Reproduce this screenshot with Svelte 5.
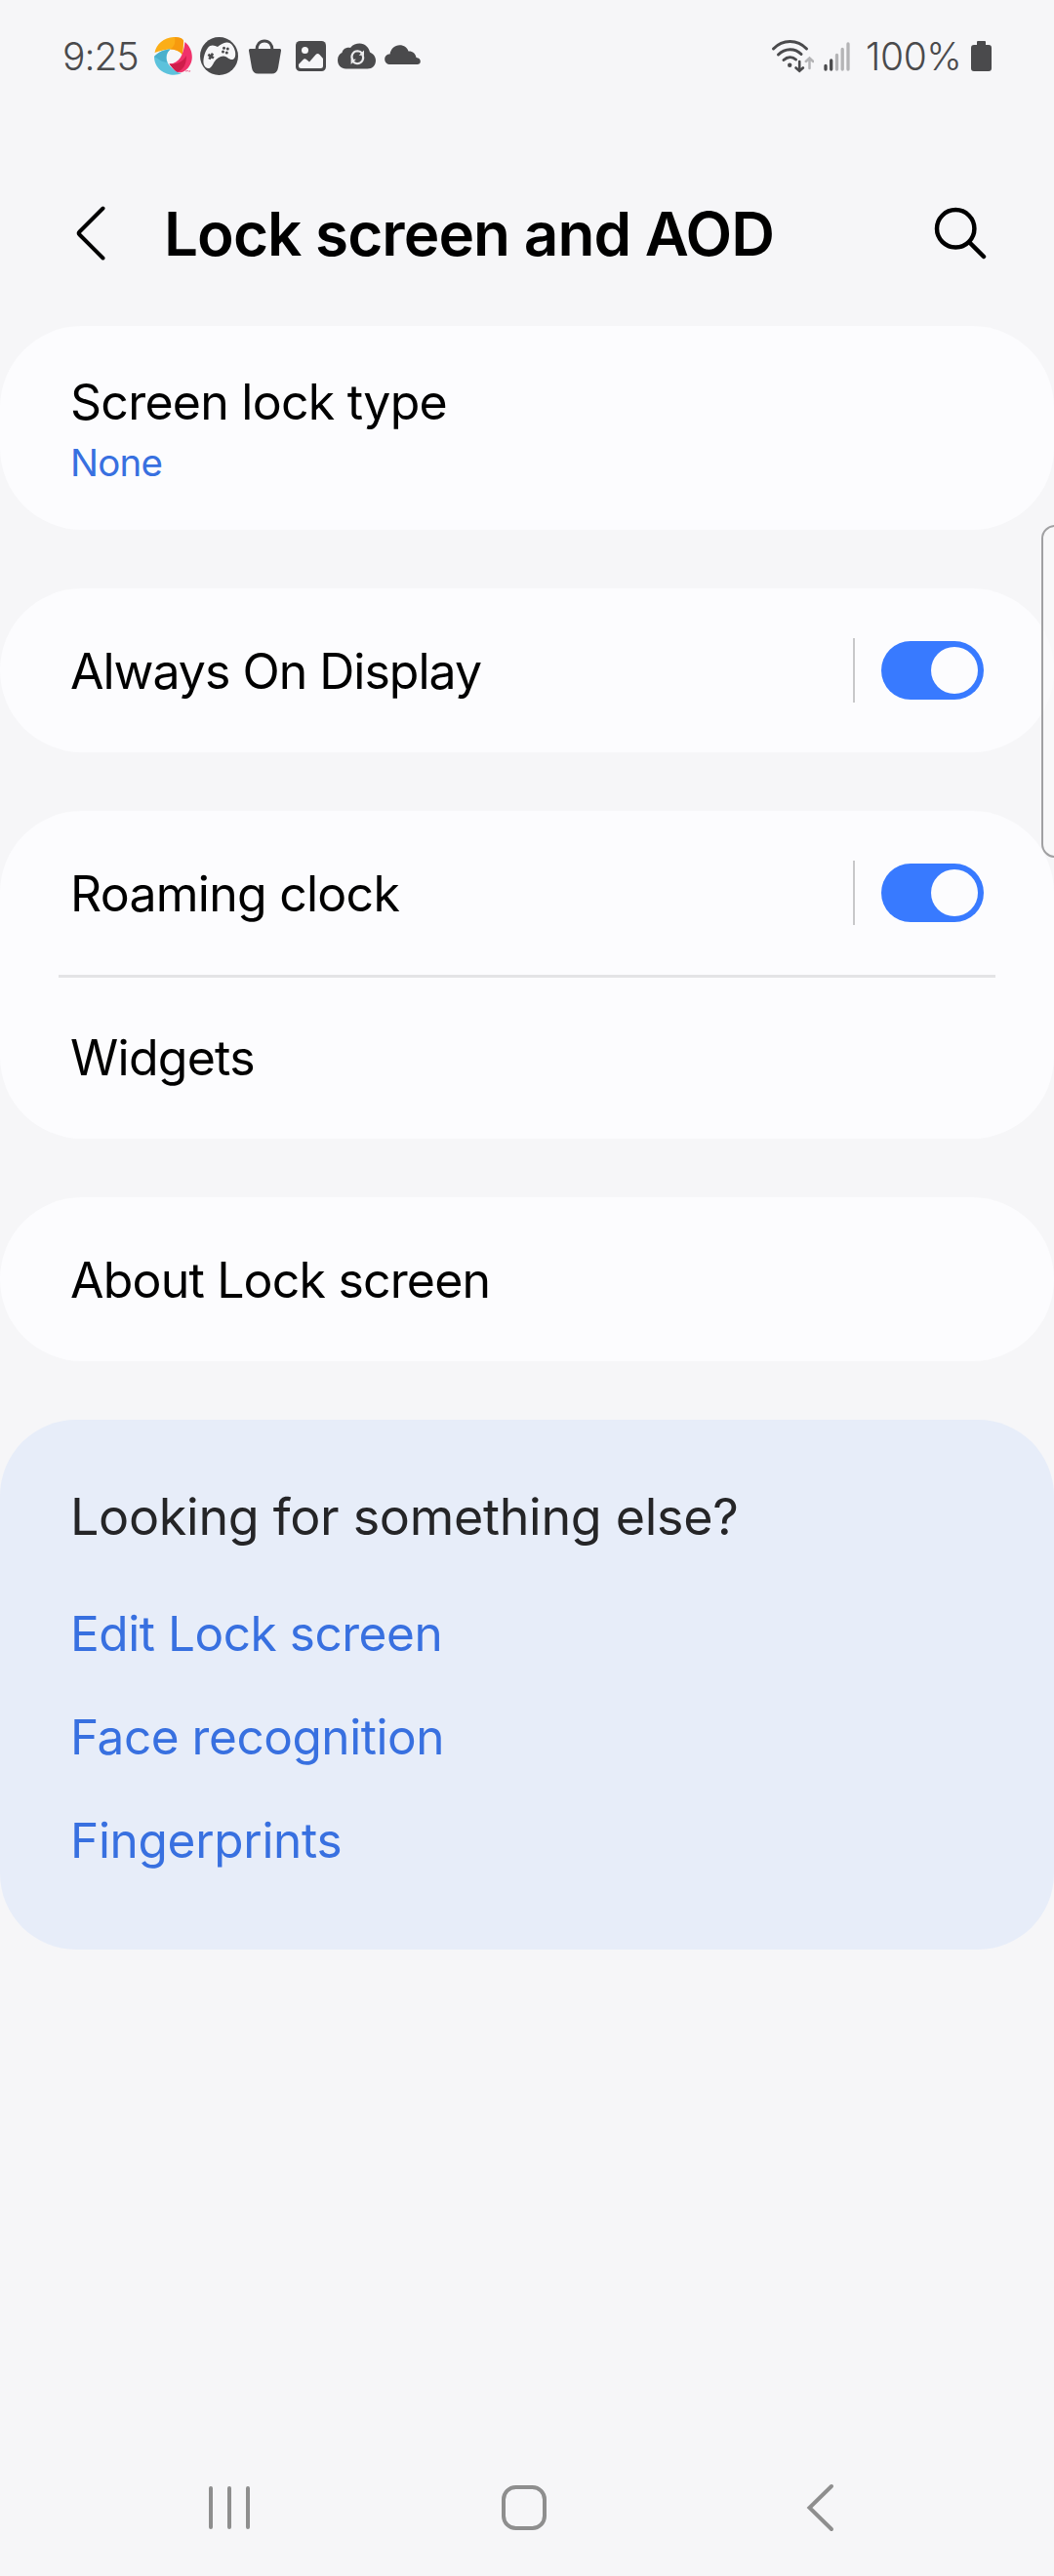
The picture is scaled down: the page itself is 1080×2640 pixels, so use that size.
<script>
  const links = [
    { label: 'Edit Lock screen', cls: 'edit' },
    { label: 'Face recognition', cls: 'face' },
    { label: 'Fingerprints', cls: 'finger' }
  ];
  let aod = $state(true);
  let roaming = $state(true);
</script>

{#snippet toggle(on, flip, label)}
  <span class="sep"></span>
  <button class="switch" class:on role="switch" aria-checked={on} aria-label={label} onclick={flip}>
    <span class="knob"></span>
  </button>
{/snippet}

<div class="screen">
  <header class="status">
    <span class="clock">9:25</span>
    <div class="notif">
      <svg width="40" height="40" viewBox="158 38 40 40">
        <path d="M158.500 54C160 45 169 37.500 180 38C185 38.200 188.500 40 188 43L187 56C181 49 172 49 158.500 54Z" fill="#fbae17" />
        <path d="M179 38C185 38.200 188.500 40 188 43L187 56C184 52 179 50.500 174 50.500C179 48 180 43 179 38Z" fill="#f79a0e" />
        <path d="M189.500 43C196 48 199 58 195 66C192 72 187 75.500 181 74C178 71 175 67.500 173.500 65.500C184 65 188 56 189.500 43Z" fill="#f0326b" />
        <path d="M173.500 65.500C183 66.500 188 62 191 57C191 66 188 72 181 74C178 71 175 67.500 173.500 65.500Z" fill="#cf1d4b" />
        <path d="M158 58C163 53 168 51 174.500 50.500C170 54 169 62 174 67.500C178 72 182 75 186 75C176 80 158 74 158 58Z" fill="#5cc2dc" />
        <path d="M158 58C163 53 168 51 174.500 50.500C170 54 169 60 171.500 64C166 64 162 60 158 58Z" fill="#4ab0cc" />
        <path d="M190 73l3-.5M193.500 73.500l1.500-1" stroke="#f06a94" stroke-width="1.200" />
      </svg>
      <svg width="39" height="39" viewBox="205 38 39 39">
        <circle cx="224.500" cy="57.500" r="19.500" fill="#4a4a4c" />
        <path d="M213 49C216 45 220 46.500 223 48C226 45.500 229 44 232 43.500C237 43 240 48 241 53C241.600 57 241 60 238.500 61C235 61.500 232 57.500 229 57.500C225 57.500 222 60 219.500 63.500C217.500 67 216 70.500 213 70C209 69 207.500 65 209 58C210 54 211 51.500 213 49Z" fill="#f6f6f8" />
        <path d="M213.300 55.800l5.600 3.700M218 54.700l-3.600 5.900" stroke="#4a4a4c" stroke-width="2.600" />
        <g fill="#4a4a4c"><circle cx="229.500" cy="49.200" r="1.500" /><circle cx="233.300" cy="50" r="1.500" /><circle cx="228.500" cy="53" r="1.500" /><circle cx="232.300" cy="54" r="1.500" /></g>
      </svg>
      <svg class="bag" width="33" height="36" viewBox="255 39.500 33 36">
        <path d="M263 51C263 45 266.500 41.500 271 41.500S279 45 279 51" fill="none" stroke="#4a4a4c" stroke-width="3.200" />
        <path d="M256.500 49.500H286.500Q288.200 49.500 288 51.500L285 69Q284 75 278.500 75H264.500Q259 75 258 69L255 51.500Q254.800 49.500 256.500 49.500Z" fill="#4a4a4c" />
      </svg>
      <svg class="photo" width="31" height="31" viewBox="303 42 31 31">
        <rect x="303" y="42" width="31" height="31" rx="4.500" fill="#4a4a4c" />
        <circle cx="312.500" cy="51.600" r="3.500" fill="#f6f6f8" />
        <path d="M306 66L310.500 61.200Q312.200 59.500 314 61L317 63.500L323.500 56Q325.500 54 327.500 56L331 60V67.500Q331 70 328.500 70H308.500Q306 70 306 67.500Z" fill="#f6f6f8" />
      </svg>
      <svg class="sync" width="39" height="27" viewBox="346 43.500 39 27">
        <path d="M354.500 70C349.500 70 346 66.500 346 61C346 57 348 54.500 350.500 53.500C351 50 355 47.500 359 48.500C361.500 45 365 44 368.500 44C374 44 378 48 379 53C382.500 54.500 385 57.500 385 61.500C385 66.500 381.500 70 376.500 70Z" fill="#4a4a4c" />
        <g fill="none" stroke="#ececee" stroke-width="2.100">
          <path d="M361.300 61C358.800 56.500 362 51.700 366.500 51.700Q369.300 51.900 371 54" />
          <path d="M371.300 55.500C373.800 60 370.600 64.700 366 64.700Q363.300 64.500 361.500 62.500" />
        </g>
        <path d="M373 51v5.300h-5.300ZM359.600 65.500v-5.300h5.300Z" fill="#ececee" />
      </svg>
      <svg class="cloud" width="37" height="21" viewBox="394 46 37 21">
        <path d="M400 66C396.500 66 394.200 64 394.200 60.500C394.200 57.500 396.500 55.500 399.500 55.500C400.500 50 404.500 46.300 409.500 46.300C414 46.300 417.500 49 418.500 52.500C422.500 52.200 426 55 426.500 59C429.500 59.300 430.800 61 430.800 63C430.800 65 429.500 66 427.500 66Z" fill="#4a4a4c" />
      </svg>
    </div>
    <div class="system">
      <svg width="44" height="36" viewBox="790 39 44 36">
        <g fill="none" stroke="#4a4a4c" stroke-width="3" stroke-linecap="round">
          <path d="M792.500 49C802 39 817 39 826.500 49" />
          <path d="M797.500 55C804.500 48 814.500 48 821 54.500" />
          <path d="M803 60.500C807 56.800 812 56.800 815.500 60" />
          <path d="M819.200 62v9.500M815.500 68.500l3.700 3.300l3.700-3.300" stroke-width="2.600" />
          <path d="M829.500 69v-10.500M825.800 62l3.700-3.500l3.700 3.500" stroke="#b4b4b6" stroke-width="2.500" />
        </g>
        <circle cx="809.200" cy="65.800" r="2.200" fill="#4a4a4c" />
      </svg>
      <svg class="signal" width="28" height="30" viewBox="844 41.500 28 30">
        <g stroke-width="3.300" stroke-linecap="round">
          <path d="M846 66v3.500M851.700 60.500v9" stroke="#4a4a4c" />
          <path d="M857.500 55v14.500M863.200 49v20.500M869 43.500v26" stroke="#b4b4b6" />
        </g>
      </svg>
      <span class="percent">100%</span>
      <svg width="21" height="31" viewBox="995 41 21 31">
        <path d="M1002 41H1009Q1010 41 1010 42V45H1013Q1016 45 1016 48V69Q1016 72 1013 72H998Q995 72 995 69V48Q995 45 998 45H1001V42Q1001 41 1002 41Z" fill="#4a4a4c" />
      </svg>
    </div>
  </header>

  <div class="appbar">
    <svg width="36" height="60" viewBox="74 208 36 60">
      <path d="M105.500 212.500L81.500 236.500Q80 238 81.500 239.500L105.500 263.500" fill="none" stroke="#000" stroke-width="4" stroke-linecap="round" />
    </svg>
    <h1>Lock screen and AOD</h1>
    <svg class="search" width="56" height="56" viewBox="956 210 56 56">
      <circle cx="979.200" cy="233.300" r="19.200" fill="none" stroke="#000" stroke-width="4.500" />
      <path d="M993.500 247.500L1008 262" stroke="#000" stroke-width="4.500" stroke-linecap="round" />
    </svg>
  </div>

  <main>
    <section class="card lock">
      <span class="label t1">Screen lock type</span>
      <span class="value">None</span>
    </section>
    <section class="card">
      <div class="row"><span class="label t2">Always On Display</span>{@render toggle(aod, () => (aod = !aod), 'Always On Display')}</div>
    </section>
    <section class="card">
      <div class="row"><span class="label t3">Roaming clock</span>{@render toggle(roaming, () => (roaming = !roaming), 'Roaming clock')}</div>
      <hr />
      <div class="row"><span class="label t4">Widgets</span></div>
    </section>
    <section class="card">
      <div class="row"><span class="label t5">About Lock screen</span></div>
    </section>
    <section class="card tips">
      <h2>Looking for something else?</h2>
      {#each links as link}
        <a class={link.cls} href="#top">{link.label}</a>
      {/each}
    </section>
  </main>

  <nav>
    <svg width="42" height="48" viewBox="214 2546 42 48">
      <path d="M216 2550v40M235 2550v40M254 2550v40" stroke="#8e8e8e" stroke-width="4" stroke-linecap="round" />
    </svg>
    <svg class="home" width="48" height="48" viewBox="513 2546 48 48">
      <rect x="516" y="2549" width="42" height="42" rx="12.500" fill="none" stroke="#8e8e8e" stroke-width="4" />
    </svg>
    <svg class="back" width="30" height="50" viewBox="826 2545 30 50">
      <path d="M852 2548L829.500 2570L852 2592" fill="none" stroke="#8e8e8e" stroke-width="4" stroke-linecap="round" />
    </svg>
  </nav>

  <div class="edge"></div>
</div>

<style>
  :global(body) { margin: 0; background: #f6f6f8; }
  .screen {
    position: relative;
    display: flex;
    flex-direction: column;
    width: 1080px;
    height: 2640px;
    overflow: hidden;
    background: #f6f6f8;
    font-family: Inter, Roboto, sans-serif;
    color: #000;
  }
  svg { display: block; flex: none; }
  .status {
    display: flex;
    align-items: center;
    height: 115px;
    padding: 0 64px;
    box-sizing: border-box;
    color: #4a4a4c;
    font: 350 39px/1 Inter, sans-serif;
    letter-spacing: -1px;
  }
  .clock { width: 94px; white-space: nowrap; }
  .notif { display: flex; align-items: center; }
  .notif svg + svg { margin-left: 7px; }
  .notif .bag { margin-left: 11px; }
  .notif .photo { margin-left: 15px; }
  .notif .sync { margin-left: 12px; }
  .notif .cloud { margin: -2px 0 0 9px; }
  .system { display: flex; align-items: center; margin-left: auto; }
  .signal { margin-left: 10px; }
  .percent { width: 108px; margin-left: 15px; white-space: nowrap; letter-spacing: -0.400px; }
  .appbar {
    display: flex;
    flex: none;
    align-items: center;
    height: 219px;
    padding: 28px 68px 0 74px;
    box-sizing: border-box;
  }
  h1 { margin: 2px 0 0 58px; font-size: 62px; font-weight: 600; line-height: 72px; letter-spacing: -0.950px; white-space: nowrap; }
  .search { margin-left: auto; }
  main { display: flex; flex-direction: column; gap: 60px; }
  .card { position: relative; display: flex; flex-direction: column; border-radius: 84px; background: #fcfcfe; }
  .lock { height: 209px; padding: 46px 72px 0; box-sizing: border-box; }
  .label { font-size: 50px; line-height: 64px; letter-spacing: -0.750px; white-space: nowrap; }
  .t2 { letter-spacing: -1px; }
  .t5 { letter-spacing: -0.820px; }
  .row .label { padding-top: 2px; }
  .value { font-size: 38.500px; line-height: 48px; margin-top: 6px; letter-spacing: -0.800px; color: #3870e0; }
  .row { display: flex; align-items: center; height: 168px; padding: 0 72px; }
  .sep { width: 2px; height: 66px; margin-left: auto; background: #c8c8ca; }
  .switch {
    display: flex;
    align-items: center;
    width: 105px;
    height: 60px;
    margin-left: 27px;
    padding: 6px;
    border: 0;
    border-radius: 30px;
    background: #9a9a9e;
  }
  .switch.on { justify-content: flex-end; background: #387aff; }
  .knob { width: 48px; height: 48px; border-radius: 50%; background: #fcfcfe; }
  hr { width: 960px; height: 3px; margin: 0 auto -3px; border: 0; background: #e4e4e6; }
  .tips { height: 543px; padding: 66px 72px 0; box-sizing: border-box; border-radius: 78px; background: #e7edf9; }
  h2 { margin: 0; font-size: 52px; line-height: 68px; font-weight: 400; letter-spacing: -0.300px; color: #252527; white-space: nowrap; }
  a { align-self: flex-start; font-size: 49.500px; line-height: 106px; letter-spacing: -0.450px; color: #3870e0; text-decoration: none; white-space: nowrap; }
  h2 + a { margin-top: 32px; }
  .finger { letter-spacing: -0.300px; }
  nav {
    display: flex;
    align-items: center;
    height: 140px;
    margin-top: auto;
    padding: 0 224px 0 214px;
  }
  .home { margin-left: 257px; }
  .back { margin-left: auto; }
  .edge {
    position: absolute;
    top: 538px;
    left: 1067px;
    width: 30px;
    height: 341px;
    box-sizing: border-box;
    border: 2.500px solid #a0a0a2;
    border-radius: 14px;
    background: rgba(250, 250, 250, 0.7);
  }
</style>
